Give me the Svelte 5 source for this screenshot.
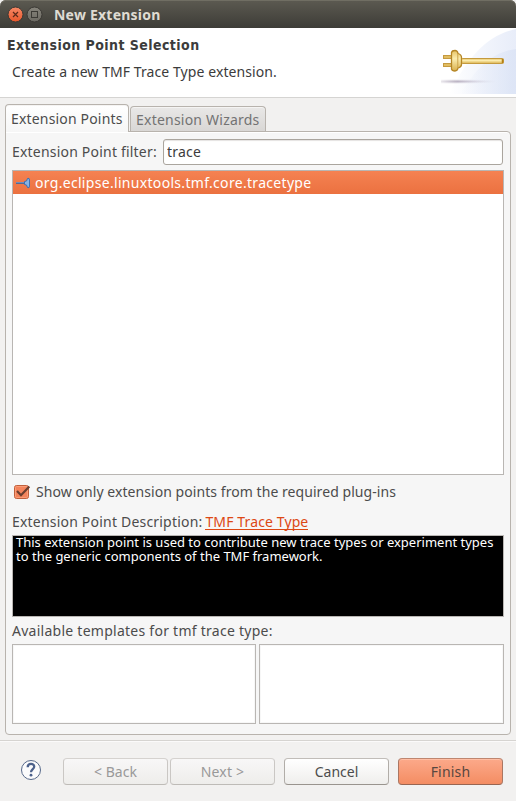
<script>
  let filter = $state('trace');
  let requiredOnly = $state(true);
</script>

<div class="window">
  <div class="titlebar">
    <svg width="38" height="18" viewBox="0 0 38 18">
      <defs>
        <linearGradient id="close" x1="0" y1="0" x2="0" y2="1"><stop offset="0" stop-color="#f78a67" /><stop offset="1" stop-color="#e8562a" /></linearGradient>
        <linearGradient id="max" x1="0" y1="0" x2="0" y2="1"><stop offset="0" stop-color="#86847b" /><stop offset="1" stop-color="#6b6962" /></linearGradient>
      </defs>
      <circle cx="9.5" cy="9.5" r="7.5" fill="url(#close)" stroke="#3a3833" />
      <path d="M7 7l5 5M12 7l-5 5" stroke="#5b2a1a" stroke-width="1.2" />
      <circle cx="28.5" cy="9.5" r="7.5" fill="url(#max)" stroke="#3a3833" />
      <rect x="25.5" y="6.5" width="6" height="6" fill="none" stroke="#3b3a35" />
    </svg>
    <span class="title">New Extension</span>
  </div>

  <header>
    <div class="heading">
      <h1>Extension Point Selection</h1>
      <p>Create a new TMF Trace Type extension.</p>
    </div>
    <svg class="banner" width="76" height="66" viewBox="0 0 76 66">
      <defs>
        <linearGradient id="wash" x1="0" y1="0" x2="1" y2="0"><stop offset="0" stop-color="#fff" /><stop offset=".5" stop-color="#f2f5fc" /><stop offset="1" stop-color="#e8edf9" /></linearGradient>
        <linearGradient id="wash2" x1="0" y1="0" x2="1" y2="0"><stop offset="0" stop-color="#dfe6f6" stop-opacity="0" /><stop offset="1" stop-color="#d5dff4" /></linearGradient>
        <linearGradient id="gold" x1="0" y1="0" x2="0" y2="1"><stop offset="0" stop-color="#e6c365" /><stop offset=".4" stop-color="#fbecae" /><stop offset="1" stop-color="#d9b04c" /></linearGradient>
        <linearGradient id="shade" x1="0" y1="0" x2="1" y2="0"><stop offset="0" stop-color="#c4bdcb" stop-opacity=".3" /><stop offset=".3" stop-color="#bcb4c4" /><stop offset="1" stop-color="#d5d5e4" stop-opacity="0" /></linearGradient>
      </defs>
      <path d="M76 1C48 7 29 27 9 66H76Z" fill="url(#wash)" />
      <path d="M76 21C53 24 38 38 20 66H76Z" fill="url(#wash2)" opacity=".6" />
      <path d="M1 52.5H54L56 53.5L54 54.5H1Z" fill="url(#shade)" />
      <path d="M1 51.5H46V55.5H1Z" fill="url(#shade)" opacity=".3" />
      <rect x="3.5" y="27.5" width="8" height="3" fill="#e1bd62" stroke="#c59a40" />
      <rect x="3.5" y="35.5" width="8" height="3" fill="#e1bd62" stroke="#c59a40" />
      <rect x="21.5" y="30.5" width="42" height="5" rx="1" fill="url(#gold)" stroke="#c49a3e" />
      <path d="M11.5 24.5Q12 22.5 15 22.5Q17.5 22.5 18 25.5Q21.5 26.5 21.5 29.5V36.5Q21.5 39 18 40Q17.5 43 15 43Q12 43 11.5 41Z" fill="url(#gold)" stroke="#b58626" stroke-width="1.3" />
      <path d="M17.8 26v14" stroke="#cba34a" />
      <path d="M62.5 31v4" stroke="#b37f15" stroke-width="1.5" />
    </svg>
  </header>

  <main>
    <nav>
      <button class="tab active"><span>Extension Points</span></button>
      <button class="tab"><span>Extension Wizards</span></button>
    </nav>
    <section>
      <div class="filter">
        <label for="filter">Extension Point filter:</label>
        <input id="filter" type="text" bind:value={filter} />
      </div>
      <div class="tree">
        <div class="row">
          <svg width="15" height="12" viewBox="0 0 15 12">
            <path d="M0 6h9" stroke="#50658f" stroke-width="2" />
            <path d="M0 5.6h9" stroke="#7f9ccb" stroke-width=".8" />
            <path d="M8.5 4.5L10.5 4L11.5 1.5Q13.5 .5 13.5 3V9Q13.5 11.5 11.5 10.5L10.5 8L8.5 7.5Z" fill="#84b4e6" stroke="#3f6fb0" />
          </svg>
          <span>org.eclipse.linuxtools.tmf.core.tracetype</span>
        </div>
      </div>
      <label class="check">
        <input type="checkbox" bind:checked={requiredOnly} />
        <svg width="18" height="17" viewBox="0 0 18 17">
          <rect x="0.5" y="1.5" width="14" height="13" rx="2" fill="#f4845c" stroke="#c0603c" />
          <rect x="1.5" y="2.5" width="12" height="11" rx="1" fill="none" stroke="#fa9d78" />
          {#if requiredOnly}<path d="M3 7L7 11.2L15.3 2.5" fill="none" stroke="#6a3f30" stroke-width="2.2" />{/if}
        </svg>
        <span>Show only extension points from the required plug-ins</span>
      </label>
      <div class="about"><span>Extension Point Description:</span><a href="#tmf">TMF Trace Type</a></div>
      <div class="description">This extension point is used to contribute new trace types or experiment types to the generic components of the TMF framework.</div>
      <div class="available"><span>Available templates for tmf trace type:</span></div>
      <div class="lists"><div></div><div></div></div>
    </section>
  </main>

  <footer>
    <svg class="help" width="22" height="22" viewBox="0 0 22 22">
      <circle cx="11" cy="11" r="9.5" fill="#fbfbfc" stroke="#57698a" />
      <path d="M7.7 8.2C7.7 3.8 14.4 4 14.2 7.8C14.1 10.1 11 10.1 11 13.2" fill="none" stroke="#4d628c" stroke-width="2.3" />
      <circle cx="11" cy="16.2" r="1.4" fill="#4d628c" />
    </svg>
    <button class="btn" disabled><span>&lt; Back</span></button>
    <button class="btn next" disabled><span>Next &gt;</span></button>
    <button class="btn cancel"><span>Cancel</span></button>
    <button class="btn finish"><span>Finish</span></button>
  </footer>
</div>

<style>
  :global(body) { margin: 0; background: #f2f1f0; }
  * { box-sizing: border-box; }
  .window { width: 516px; height: 801px; display: flex; flex-direction: column; overflow: hidden; background: #f2f1f0; color: #4c4c4c; font: 14px/20px "Noto Sans", sans-serif; white-space: nowrap; }
  button, input { font: inherit; color: inherit; margin: 0; }
  svg { display: block; flex: none; }
  .titlebar { height: 28px; flex: none; display: flex; align-items: center; padding: 0 0 0 6px; border-radius: 6px 6px 0 0; background: linear-gradient(#5c5a51, #3d3c37); box-shadow: inset 0 1px #706e63; }
  .title { margin: 2px 0 0 10px; font-weight: 700; font-size: 14px; color: #dfdbd2; letter-spacing: .22px; }
  header { height: 70px; flex: none; display: flex; justify-content: space-between; background: #fff; border-bottom: 1px solid #d5d4d2; color: #3c3c3c; }
  .heading { padding-left: 7px; }
  h1 { margin: 7px 0 0; font: 700 14px/20px "DejaVu Sans Condensed", "DejaVu Sans", sans-serif; font-stretch: condensed; letter-spacing: .44px; }
  p { margin: 7px 0 0 5px; letter-spacing: .08px; }
  main { height: 642px; flex: none; padding: 6px 5px 5px; }
  nav { display: flex; align-items: flex-end; height: 28px; gap: 1px; position: relative; margin-bottom: -1px; }
  .tab { height: 25px; width: 136px; padding: 2px 0 0 5px; text-align: left; border: 1px solid #b8b3ad; border-radius: 4px 4px 0 0; background: linear-gradient(#e9e8e7, #d9d7d5); color: #737373; margin-bottom: 1px; border-bottom: 0; box-shadow: inset 0 1px #f5f4f3; line-height: 20px; letter-spacing: .22px; }
  .tab.active { height: 28px; width: 124px; padding-top: 1px; color: #4c4c4c; background: linear-gradient(#fff, #f6f6f6); margin: 0; letter-spacing: .17px; }
  section { height: 604px; border: 1px solid #b8b3ad; border-radius: 0 4px 4px 4px; background: #f6f6f6; box-shadow: inset 0 1px #fff; padding: 7px 6px 0; }
  .filter { height: 26px; display: flex; align-items: center; justify-content: space-between; letter-spacing: .2px; }
  .filter input { width: 340px; height: 26px; padding: 0 3px 2px; border: 1px solid #aaa59e; border-radius: 3px; background: #fff; color: #3c3c3c; box-shadow: inset 0 1px 1px #e5e3e1; outline: none; margin-right: 1px; letter-spacing: .2px; }
  .tree { height: 305px; margin-top: 5px; border: 1px solid #b9b6b3; background: #fff; }
  .row { height: 23px; display: flex; align-items: center; gap: 4px; padding-left: 3px; background: linear-gradient(#f58252, #eb7140); color: #fff; letter-spacing: .31px; }
  .check { display: flex; align-items: center; height: 22px; margin-top: 6px; padding-left: 2px; gap: 4px; letter-spacing: .06px; }
  .check input { position: absolute; opacity: 0; pointer-events: none; }
  .about { display: flex; gap: 3px; height: 20px; margin-top: 9px; letter-spacing: .2px; }
  .about a { color: #dd4814; letter-spacing: .12px; text-decoration: none; height: 18px; border-bottom: 1px solid #dd4814; }
  .description { height: 82px; margin-top: 3px; padding-left: 3px; border: 1px solid #b9b6b3; background: #000; color: #fff; font-size: 13px; line-height: 13.6px; white-space: normal; }
  .available { margin-top: 4px; height: 20px; letter-spacing: .26px; }
  .lists { display: flex; gap: 3px; margin-top: 3px; }
  .lists div { height: 80px; width: 245px; background: #fff; border: 1px solid #b9b6b3; box-shadow: inset 0 0 0 1px #f7f7f7; }
  .lists div:first-child { width: 244px; }
  footer { height: 61px; border-top: 1px solid #d6d4d1; box-shadow: inset 0 1px #fbfafa; display: flex; align-items: flex-start; padding: 17px 0 0 20px; }
  .help { margin: 1px 21px 0 0; }
  .btn { width: 105px; height: 27px; padding: 0; border: 1px solid #cac7c4; border-color: #d5d2cf #cac7c4 #bebbb7; border-radius: 4px; background: linear-gradient(#f8f7f7, #eeedeb); color: #999; }
  .next { margin-left: 2px; letter-spacing: .2px; }
  .cancel { margin-left: 9px; color: #4c4c4c; background: linear-gradient(#fff, #efeeec); border-color: #c1bdb9 #b1ada8 #99948e; }
  .finish { margin-left: 9px; color: #584740; background: linear-gradient(#fca98a, #f48d63); border-color: #be8670 #aa7662 #996551; box-shadow: inset 0 1px #ffbea4; letter-spacing: .2px; }
</style>
